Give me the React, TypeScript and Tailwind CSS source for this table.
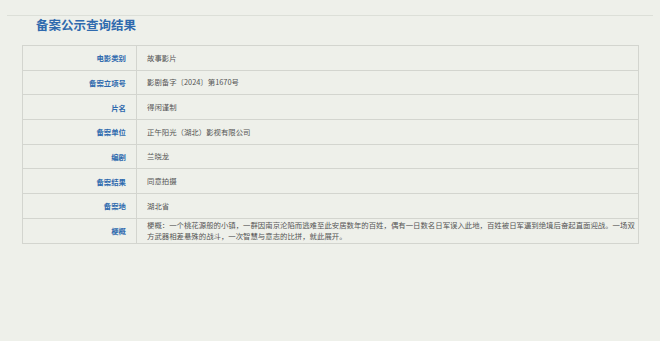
const rows: [string, string][] = [
  ['电影类别', '故事影片'],
  ['备案立项号', '影剧备字〔2024〕第1670号'],
  ['片名', '得闲谨制'],
  ['备案单位', '正午阳光（湖北）影视有限公司'],
  ['编剧', '兰晓龙'],
  ['备案结果', '同意拍摄'],
  ['备案地', '湖北省'],
  [
    '梗概',
    '梗概：一个桃花源般的小镇，一群因南京沦陷而逃难至此安居数年的百姓，偶有一日数名日军误入此地，百姓被日军逼到绝境后奋起直面迎战。一场双方武器相差悬殊的战斗，一次智慧与意志的比拼，就此展开。',
  ],
];

export default function App() {
  return (
    <div className="w-[660px] h-[341px] bg-[#eef0ea] pt-[15px] font-['Noto_Sans_CJK_SC',sans-serif] overflow-hidden">
      <div className="mx-[7px] border-t border-[#dcdfd8]">
        <h1 className="pl-[29px] text-[12.5px] leading-[17px] font-bold text-[#2f6aae]">
          备案公示查询结果
        </h1>
      </div>

      <table className="ml-[22px] mt-[12px] w-[617px] border-collapse border border-[#d3d5cf] text-[7.4px]">
        <tbody>
          {rows.map(([label, value]) => (
            <tr key={label} className="border-b border-[#d3d5cf]">
              <td className="w-[114px] h-[24.7px] p-0 pr-[10px] text-right align-middle font-bold text-[#2f6aae] border-r border-[#d3d5cf]">
                {label}
              </td>
              <td className="pl-[10px] pr-[1px] py-[1px] align-middle leading-[10.5px] text-[#555]">
                {value}
              </td>
            </tr>
          ))}
        </tbody>
      </table>
    </div>
  );
}
